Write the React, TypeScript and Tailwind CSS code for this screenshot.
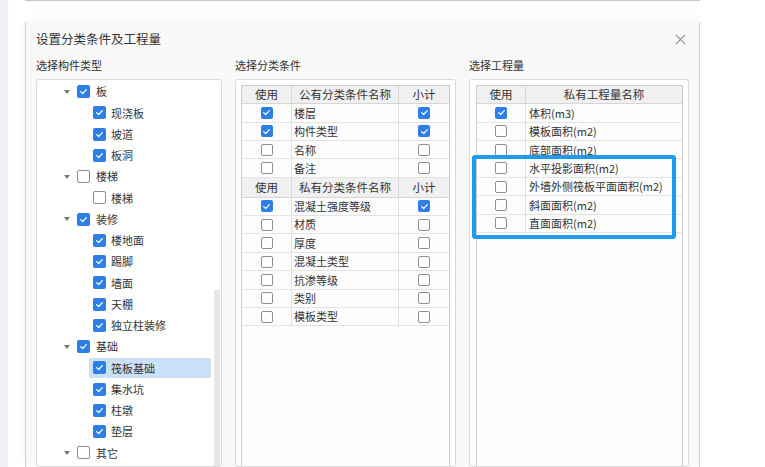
const FONT = { fontFamily: '"Noto Sans CJK SC", "Noto Sans", sans-serif' };

type Node = { label: string; checked: boolean; children?: { label: string; checked: boolean; selected?: boolean }[] };

const tree: Node[] = [
  { label: "板", checked: true, children: [
    { label: "现浇板", checked: true },
    { label: "坡道", checked: true },
    { label: "板洞", checked: true },
  ] },
  { label: "楼梯", checked: false, children: [{ label: "楼梯", checked: false }] },
  { label: "装修", checked: true, children: [
    { label: "楼地面", checked: true },
    { label: "踢脚", checked: true },
    { label: "墙面", checked: true },
    { label: "天棚", checked: true },
    { label: "独立柱装修", checked: true },
  ] },
  { label: "基础", checked: true, children: [
    { label: "筏板基础", checked: true, selected: true },
    { label: "集水坑", checked: true },
    { label: "柱墩", checked: true },
    { label: "垫层", checked: true },
  ] },
  { label: "其它", checked: false },
];

const publicConds = [
  { name: "楼层", use: true, sub: true },
  { name: "构件类型", use: true, sub: true },
  { name: "名称", use: false, sub: false },
  { name: "备注", use: false, sub: false },
];

const privateConds = [
  { name: "混凝土强度等级", use: true, sub: true },
  { name: "材质", use: false, sub: false },
  { name: "厚度", use: false, sub: false },
  { name: "混凝土类型", use: false, sub: false },
  { name: "抗渗等级", use: false, sub: false },
  { name: "类别", use: false, sub: false },
  { name: "模板类型", use: false, sub: false },
];

const quantities = [
  { name: "体积(m3)", use: true },
  { name: "模板面积(m2)", use: false },
  { name: "底部面积(m2)", use: false },
  { name: "水平投影面积(m2)", use: false },
  { name: "外墙外侧筏板平面面积(m2)", use: false },
  { name: "斜面面积(m2)", use: false },
  { name: "直面面积(m2)", use: false },
];

function Check({ on, big }: { on: boolean; big?: boolean }) {
  const size = big ? "w-[13px] h-[13px]" : "w-[12px] h-[12px]";
  if (on) {
    return (
      <span className={`${size} shrink-0 rounded-[2px] bg-[#2d7fe6] flex items-center justify-center`}>
        <svg viewBox="0 0 12 12" className="w-[9px] h-[9px]">
          <path d="M2.2 6.2 L4.9 8.7 L9.8 3.4" fill="none" stroke="#fff" strokeWidth="1.6" strokeLinecap="round" strokeLinejoin="round" />
        </svg>
      </span>
    );
  }
  return <span className={`${size} block shrink-0 rounded-[2px] border border-[#8f8f8f] bg-white`} />;
}

function Caret() {
  return (
    <svg viewBox="0 0 6 4" className="w-[6px] h-[4px]">
      <path d="M0 0 L6 0 L3 4 Z" fill="#777" />
    </svg>
  );
}

export default function App() {
  return (
    <div className="flex h-[467px] w-[765px] overflow-hidden bg-white text-[#333]" style={FONT}>
      {/* LEFT STRIP */}
      <div className="w-[8px] bg-[#eef0f6]" />

      <div className="ml-[17px] w-[675px] flex flex-col">
        <div className="h-px bg-[#c6c6c6]" />

        {/* DIALOG */}
        <div className="mt-[21px] flex-1 flex flex-col bg-[#f9f9f9] border-x border-[#cfcfcf] px-[10px] shadow-[0_-4px_10px_rgba(0,0,0,0.04)]">
          {/* TITLE */}
          <div className="h-[34px] flex items-center">
            <span className="text-[12.5px]">设置分类条件及工程量</span>
            <svg viewBox="0 0 12 12" className="ml-auto mr-[3px] w-[11px] h-[11px]">
              <path d="M1 1 L11 11 M11 1 L1 11" stroke="#8a8a8a" strokeWidth="1.1" />
            </svg>
          </div>

          <div className="flex-1 flex gap-[13px]">
            {/* COMPONENT TYPES */}
            <div className="w-[186px] flex flex-col">
              <div className="h-[18px] flex items-center text-[11px]">选择构件类型</div>
              <div className="relative mt-[5px] flex-1 rounded-[3px] border border-[#dadada] bg-white pt-[1px] text-[11px]">
                {tree.map((n, i) => (
                  <div key={i}>
                    <div className="h-[21.25px] flex items-center">
                      <span className="ml-[27px] w-[6px] flex justify-center"><Caret /></span>
                      <span className="ml-[7px] flex"><Check on={n.checked} big /></span>
                      <span className="ml-[6px]">{n.label}</span>
                    </div>
                    {n.children?.map((c, j) => (
                      <div key={j} className="h-[21.25px] flex items-center">
                        <div className={`ml-[52px] w-[122px] h-[20px] flex items-center pl-[4px] ${c.selected ? "bg-[#cce0f8]" : ""}`}>
                          <Check on={c.checked} big />
                          <span className="ml-[5px]">{c.label}</span>
                        </div>
                      </div>
                    ))}
                  </div>
                ))}
                <div className="absolute right-[1px] top-[210px] bottom-0 w-[6px] bg-[#e6e6e6]" />
              </div>
            </div>

            {/* CONDITIONS */}
            <div className="w-[221px] flex flex-col">
              <div className="h-[18px] flex items-center text-[11px]">选择分类条件</div>
              <div className="mt-[5px] flex-1 rounded-[3px] border border-[#dadada] bg-white px-[5px] pt-[5px] flex flex-col">
                <div className="flex-1 border-x border-t border-[#cdcdcd] bg-[#fdfdfd] text-[11px]">
                  <div className="h-[18.3px] flex bg-[#f0f0f0] border-b border-[#d6d6d6] text-[11.5px]">
                    <div className="w-[50px] border-r border-[#d6d6d6] flex items-center justify-center">使用</div>
                    <div className="w-[107px] border-r border-[#d6d6d6] flex items-center justify-center">公有分类条件名称</div>
                    <div className="flex-1 flex items-center justify-center">小计</div>
                  </div>
                  {publicConds.map((r, i) => (
                    <div key={i} className="h-[18.4px] flex border-b border-[#e4e4e4]">
                      <div className="w-[50px] border-r border-[#e0e0e0] flex items-center justify-center"><Check on={r.use} /></div>
                      <div className="w-[107px] border-r border-[#e0e0e0] flex items-center pl-[2px]">{r.name}</div>
                      <div className="flex-1 flex items-center justify-center"><Check on={r.sub} /></div>
                    </div>
                  ))}
                  <div className="h-[19.8px] flex bg-[#f0f0f0] border-b border-[#d6d6d6] text-[11.5px]">
                    <div className="w-[50px] border-r border-[#d6d6d6] flex items-center justify-center">使用</div>
                    <div className="w-[107px] border-r border-[#d6d6d6] flex items-center justify-center">私有分类条件名称</div>
                    <div className="flex-1 flex items-center justify-center">小计</div>
                  </div>
                  {privateConds.map((r, i) => (
                    <div key={i} className="h-[18.4px] flex border-b border-[#e4e4e4]">
                      <div className="w-[50px] border-r border-[#e0e0e0] flex items-center justify-center"><Check on={r.use} /></div>
                      <div className="w-[107px] border-r border-[#e0e0e0] flex items-center pl-[2px]">{r.name}</div>
                      <div className="flex-1 flex items-center justify-center"><Check on={r.sub} /></div>
                    </div>
                  ))}
                </div>
              </div>
            </div>

            {/* QUANTITIES */}
            <div className="w-[220px] flex flex-col">
              <div className="h-[18px] flex items-center text-[11px]">选择工程量</div>
              <div className="relative mt-[5px] flex-1 rounded-[3px] border border-[#dadada] bg-white pl-[6px] pr-[5px] pt-[5px] flex flex-col">
                <div className="flex-1 border-x border-t border-[#cdcdcd] bg-[#fdfdfd] text-[11px]">
                  <div className="h-[18.3px] flex bg-[#f0f0f0] border-b border-[#d6d6d6] text-[11.5px]">
                    <div className="w-[49px] border-r border-[#d6d6d6] flex items-center justify-center">使用</div>
                    <div className="flex-1 flex items-center justify-center">私有工程量名称</div>
                  </div>
                  {quantities.map((r, i) => (
                    <div key={i} className="h-[18.4px] flex border-b border-[#e4e4e4]">
                      <div className="w-[49px] border-r border-[#e0e0e0] flex items-center justify-center"><Check on={r.use} /></div>
                      <div className="flex-1 flex items-center pl-[3px] whitespace-nowrap">{r.name}</div>
                    </div>
                  ))}
                </div>
                {/* HIGHLIGHT ANNOTATION */}
                <div className="absolute left-[2px] top-[75px] w-[204px] h-[84px] rounded-[3px] border-4 border-[#1e9bf0]" />
              </div>
            </div>
          </div>
        </div>
      </div>
    </div>
  );
}
